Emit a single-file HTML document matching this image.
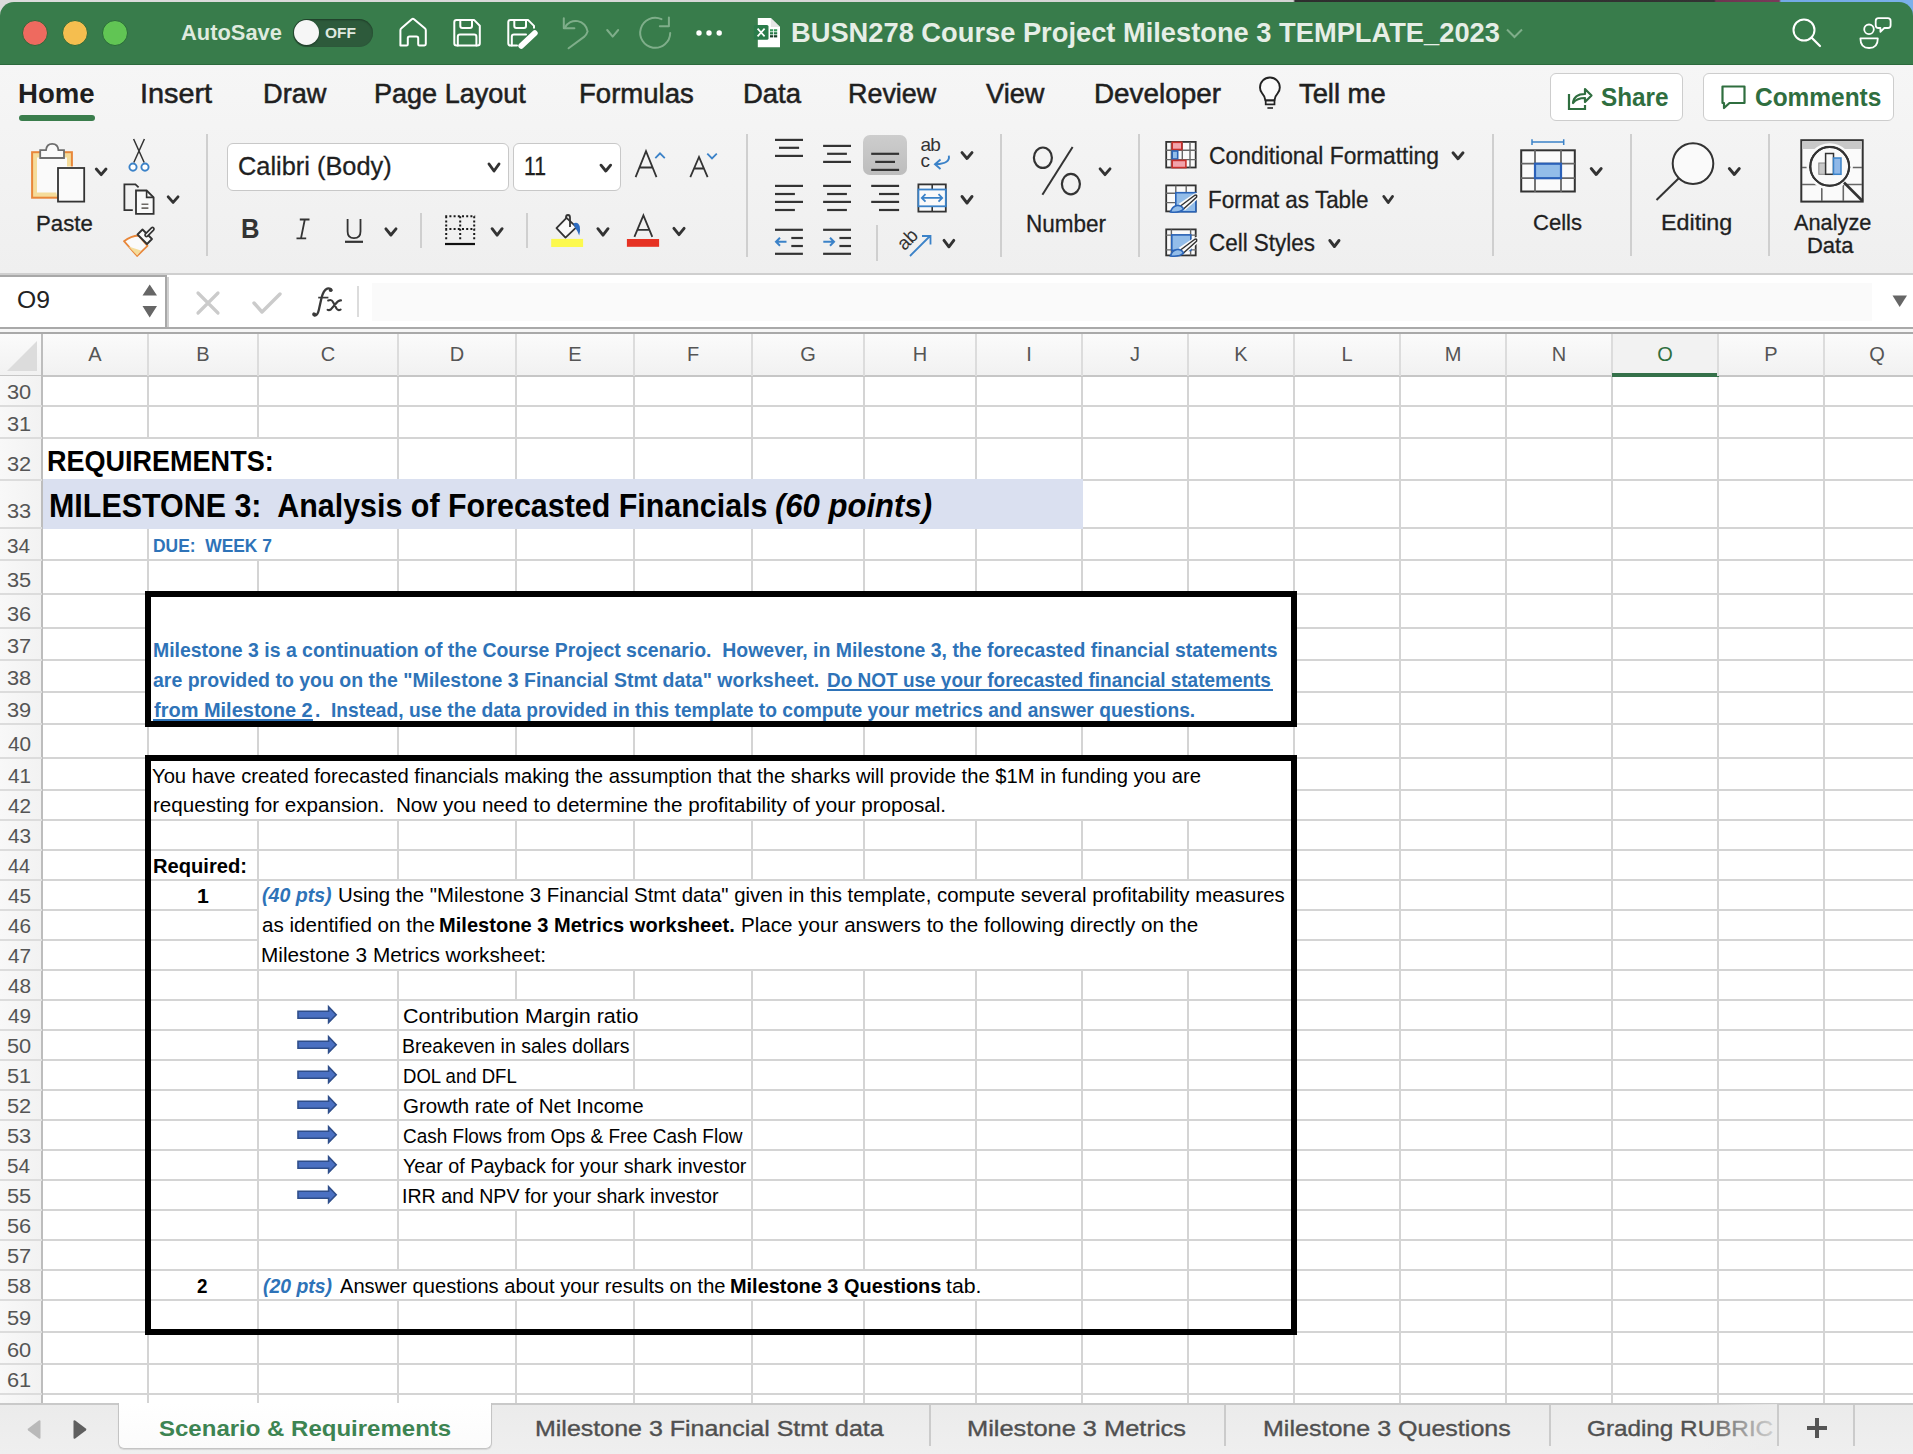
<!DOCTYPE html><html><head><meta charset="utf-8"><style>
*{margin:0;padding:0;box-sizing:border-box}
html,body{width:1913px;height:1454px;overflow:hidden;background:#fff;font-family:"Liberation Sans",sans-serif}
.t{position:absolute;white-space:pre;transform-origin:0 0}
.r{position:absolute}
svg{position:absolute;overflow:visible}
</style></head><body>
<div class="r" style="left:0px;top:376px;width:1913px;height:1027px;background:#fff;"></div>
<div class="r" style="left:42px;top:375px;width:1871px;height:2px;background:#d4d4d4;"></div>
<div class="r" style="left:42px;top:405px;width:1871px;height:2px;background:#d4d4d4;"></div>
<div class="r" style="left:42px;top:437px;width:1871px;height:2px;background:#d4d4d4;"></div>
<div class="r" style="left:42px;top:479px;width:1871px;height:2px;background:#d4d4d4;"></div>
<div class="r" style="left:42px;top:527px;width:1871px;height:2px;background:#d4d4d4;"></div>
<div class="r" style="left:42px;top:559px;width:1871px;height:2px;background:#d4d4d4;"></div>
<div class="r" style="left:42px;top:593px;width:1871px;height:2px;background:#d4d4d4;"></div>
<div class="r" style="left:42px;top:627px;width:107px;height:2px;background:#d4d4d4;"></div>
<div class="r" style="left:1293px;top:627px;width:620px;height:2px;background:#d4d4d4;"></div>
<div class="r" style="left:42px;top:659px;width:107px;height:2px;background:#d4d4d4;"></div>
<div class="r" style="left:1293px;top:659px;width:620px;height:2px;background:#d4d4d4;"></div>
<div class="r" style="left:42px;top:691px;width:107px;height:2px;background:#d4d4d4;"></div>
<div class="r" style="left:1293px;top:691px;width:620px;height:2px;background:#d4d4d4;"></div>
<div class="r" style="left:42px;top:723px;width:1871px;height:2px;background:#d4d4d4;"></div>
<div class="r" style="left:42px;top:757px;width:1871px;height:2px;background:#d4d4d4;"></div>
<div class="r" style="left:42px;top:789px;width:107px;height:2px;background:#d4d4d4;"></div>
<div class="r" style="left:1293px;top:789px;width:620px;height:2px;background:#d4d4d4;"></div>
<div class="r" style="left:42px;top:819px;width:1871px;height:2px;background:#d4d4d4;"></div>
<div class="r" style="left:42px;top:849px;width:1871px;height:2px;background:#d4d4d4;"></div>
<div class="r" style="left:42px;top:879px;width:1871px;height:2px;background:#d4d4d4;"></div>
<div class="r" style="left:42px;top:909px;width:217px;height:2px;background:#d4d4d4;"></div>
<div class="r" style="left:1293px;top:909px;width:620px;height:2px;background:#d4d4d4;"></div>
<div class="r" style="left:42px;top:939px;width:217px;height:2px;background:#d4d4d4;"></div>
<div class="r" style="left:1293px;top:939px;width:620px;height:2px;background:#d4d4d4;"></div>
<div class="r" style="left:42px;top:969px;width:1871px;height:2px;background:#d4d4d4;"></div>
<div class="r" style="left:42px;top:999px;width:1871px;height:2px;background:#d4d4d4;"></div>
<div class="r" style="left:42px;top:1029px;width:1871px;height:2px;background:#d4d4d4;"></div>
<div class="r" style="left:42px;top:1059px;width:1871px;height:2px;background:#d4d4d4;"></div>
<div class="r" style="left:42px;top:1089px;width:1871px;height:2px;background:#d4d4d4;"></div>
<div class="r" style="left:42px;top:1119px;width:1871px;height:2px;background:#d4d4d4;"></div>
<div class="r" style="left:42px;top:1149px;width:1871px;height:2px;background:#d4d4d4;"></div>
<div class="r" style="left:42px;top:1179px;width:1871px;height:2px;background:#d4d4d4;"></div>
<div class="r" style="left:42px;top:1209px;width:1871px;height:2px;background:#d4d4d4;"></div>
<div class="r" style="left:42px;top:1239px;width:1871px;height:2px;background:#d4d4d4;"></div>
<div class="r" style="left:42px;top:1269px;width:1871px;height:2px;background:#d4d4d4;"></div>
<div class="r" style="left:42px;top:1299px;width:1871px;height:2px;background:#d4d4d4;"></div>
<div class="r" style="left:42px;top:1331px;width:1871px;height:2px;background:#d4d4d4;"></div>
<div class="r" style="left:42px;top:1363px;width:1871px;height:2px;background:#d4d4d4;"></div>
<div class="r" style="left:42px;top:1393px;width:1871px;height:2px;background:#d4d4d4;"></div>
<div class="r" style="left:147px;top:376px;width:2px;height:63px;background:#d4d4d4;"></div>
<div class="r" style="left:147px;top:528px;width:2px;height:875px;background:#d4d4d4;"></div>
<div class="r" style="left:257px;top:376px;width:2px;height:63px;background:#d4d4d4;"></div>
<div class="r" style="left:257px;top:560px;width:2px;height:35px;background:#d4d4d4;"></div>
<div class="r" style="left:257px;top:724px;width:2px;height:35px;background:#d4d4d4;"></div>
<div class="r" style="left:257px;top:820px;width:2px;height:583px;background:#d4d4d4;"></div>
<div class="r" style="left:397px;top:376px;width:2px;height:105px;background:#d4d4d4;"></div>
<div class="r" style="left:397px;top:528px;width:2px;height:67px;background:#d4d4d4;"></div>
<div class="r" style="left:397px;top:724px;width:2px;height:35px;background:#d4d4d4;"></div>
<div class="r" style="left:397px;top:820px;width:2px;height:61px;background:#d4d4d4;"></div>
<div class="r" style="left:397px;top:970px;width:2px;height:301px;background:#d4d4d4;"></div>
<div class="r" style="left:397px;top:1300px;width:2px;height:103px;background:#d4d4d4;"></div>
<div class="r" style="left:515px;top:376px;width:2px;height:105px;background:#d4d4d4;"></div>
<div class="r" style="left:515px;top:528px;width:2px;height:67px;background:#d4d4d4;"></div>
<div class="r" style="left:515px;top:724px;width:2px;height:35px;background:#d4d4d4;"></div>
<div class="r" style="left:515px;top:820px;width:2px;height:61px;background:#d4d4d4;"></div>
<div class="r" style="left:515px;top:970px;width:2px;height:31px;background:#d4d4d4;"></div>
<div class="r" style="left:515px;top:1210px;width:2px;height:61px;background:#d4d4d4;"></div>
<div class="r" style="left:515px;top:1300px;width:2px;height:103px;background:#d4d4d4;"></div>
<div class="r" style="left:633px;top:376px;width:2px;height:105px;background:#d4d4d4;"></div>
<div class="r" style="left:633px;top:528px;width:2px;height:67px;background:#d4d4d4;"></div>
<div class="r" style="left:633px;top:724px;width:2px;height:35px;background:#d4d4d4;"></div>
<div class="r" style="left:633px;top:820px;width:2px;height:61px;background:#d4d4d4;"></div>
<div class="r" style="left:633px;top:970px;width:2px;height:31px;background:#d4d4d4;"></div>
<div class="r" style="left:633px;top:1030px;width:2px;height:61px;background:#d4d4d4;"></div>
<div class="r" style="left:633px;top:1210px;width:2px;height:61px;background:#d4d4d4;"></div>
<div class="r" style="left:633px;top:1300px;width:2px;height:103px;background:#d4d4d4;"></div>
<div class="r" style="left:751px;top:376px;width:2px;height:105px;background:#d4d4d4;"></div>
<div class="r" style="left:751px;top:528px;width:2px;height:67px;background:#d4d4d4;"></div>
<div class="r" style="left:751px;top:724px;width:2px;height:35px;background:#d4d4d4;"></div>
<div class="r" style="left:751px;top:820px;width:2px;height:61px;background:#d4d4d4;"></div>
<div class="r" style="left:751px;top:970px;width:2px;height:301px;background:#d4d4d4;"></div>
<div class="r" style="left:751px;top:1300px;width:2px;height:103px;background:#d4d4d4;"></div>
<div class="r" style="left:863px;top:376px;width:2px;height:105px;background:#d4d4d4;"></div>
<div class="r" style="left:863px;top:528px;width:2px;height:67px;background:#d4d4d4;"></div>
<div class="r" style="left:863px;top:724px;width:2px;height:35px;background:#d4d4d4;"></div>
<div class="r" style="left:863px;top:820px;width:2px;height:61px;background:#d4d4d4;"></div>
<div class="r" style="left:863px;top:970px;width:2px;height:301px;background:#d4d4d4;"></div>
<div class="r" style="left:863px;top:1300px;width:2px;height:103px;background:#d4d4d4;"></div>
<div class="r" style="left:975px;top:376px;width:2px;height:105px;background:#d4d4d4;"></div>
<div class="r" style="left:975px;top:528px;width:2px;height:67px;background:#d4d4d4;"></div>
<div class="r" style="left:975px;top:724px;width:2px;height:35px;background:#d4d4d4;"></div>
<div class="r" style="left:975px;top:820px;width:2px;height:61px;background:#d4d4d4;"></div>
<div class="r" style="left:975px;top:970px;width:2px;height:301px;background:#d4d4d4;"></div>
<div class="r" style="left:975px;top:1300px;width:2px;height:103px;background:#d4d4d4;"></div>
<div class="r" style="left:1081px;top:376px;width:2px;height:219px;background:#d4d4d4;"></div>
<div class="r" style="left:1081px;top:724px;width:2px;height:35px;background:#d4d4d4;"></div>
<div class="r" style="left:1081px;top:820px;width:2px;height:61px;background:#d4d4d4;"></div>
<div class="r" style="left:1081px;top:970px;width:2px;height:433px;background:#d4d4d4;"></div>
<div class="r" style="left:1187px;top:376px;width:2px;height:219px;background:#d4d4d4;"></div>
<div class="r" style="left:1187px;top:724px;width:2px;height:35px;background:#d4d4d4;"></div>
<div class="r" style="left:1187px;top:820px;width:2px;height:61px;background:#d4d4d4;"></div>
<div class="r" style="left:1187px;top:970px;width:2px;height:433px;background:#d4d4d4;"></div>
<div class="r" style="left:1293px;top:376px;width:2px;height:1027px;background:#d4d4d4;"></div>
<div class="r" style="left:1399px;top:376px;width:2px;height:1027px;background:#d4d4d4;"></div>
<div class="r" style="left:1505px;top:376px;width:2px;height:1027px;background:#d4d4d4;"></div>
<div class="r" style="left:1611px;top:376px;width:2px;height:1027px;background:#d4d4d4;"></div>
<div class="r" style="left:1717px;top:376px;width:2px;height:1027px;background:#d4d4d4;"></div>
<div class="r" style="left:1823px;top:376px;width:2px;height:1027px;background:#d4d4d4;"></div>
<div class="r" style="left:42px;top:479px;width:1041px;height:50px;background:#dae0f0;"></div>
<div class="r" style="left:145px;top:591px;width:1152px;height:136px;border:6px solid #000"></div>
<div class="r" style="left:145px;top:755px;width:1152px;height:580px;border:6px solid #000"></div>
<div class="t" id="t0" style="left:46.95px;top:444.87px;font-size:28.99px;line-height:32.38px;color:#000;font-weight:bold;transform:scaleX(0.93214);">REQUIREMENTS:</div>
<div class="t" id="t1" style="left:48.99px;top:486.28px;font-size:34.06px;line-height:38.04px;color:#000;font-weight:bold;transform:scaleX(0.89357);">MILESTONE 3:&nbsp; Analysis of Forecasted Financials</div>
<div class="t" id="t2" style="left:774.99px;top:486.28px;font-size:34.06px;line-height:38.04px;color:#000;font-weight:bold;font-style:italic;transform:scaleX(0.91231);">(60 points)</div>
<div class="t" id="t3" style="left:153.39px;top:535.35px;font-size:18.84px;line-height:21.04px;color:#2e73b8;font-weight:bold;transform:scaleX(0.92436);">DUE:&nbsp; WEEK 7</div>
<div class="t" id="t4" style="left:153.20px;top:637.98px;font-size:21.01px;line-height:23.47px;color:#2e73b8;font-weight:bold;transform:scaleX(0.92573);">Milestone 3 is a continuation of the Course Project scenario.&nbsp; However, in Milestone 3, the forecasted financial statements</div>
<div class="t" id="t5" style="left:153.20px;top:667.98px;font-size:21.01px;line-height:23.47px;color:#2e73b8;font-weight:bold;transform:scaleX(0.92821);">are provided to you on the &quot;Milestone 3 Financial Stmt data&quot; worksheet.</div>
<div class="t" id="t6" style="left:826.99px;top:667.98px;font-size:21.01px;line-height:23.47px;color:#2e73b8;font-weight:bold;transform:scaleX(0.90354);">Do NOT use your forecasted financial statements</div>
<div class="r" style="left:827px;top:689px;width:446px;height:2px;background:#2e73b8;"></div>
<div class="t" id="t7" style="left:154.20px;top:697.98px;font-size:21.01px;line-height:23.47px;color:#2e73b8;font-weight:bold;transform:scaleX(0.95117);">from Milestone 2</div>
<div class="r" style="left:153px;top:719px;width:160px;height:2px;background:#2e73b8;"></div>
<div class="t" id="t8" style="left:315.00px;top:697.98px;font-size:21.01px;line-height:23.47px;color:#2e73b8;font-weight:bold;transform:scaleX(0.91426);">.&nbsp; Instead, use the data provided in this template to compute your metrics and answer questions.</div>
<div class="t" id="t9" style="left:152.00px;top:764.66px;font-size:19.71px;line-height:22.02px;color:#000;transform:scaleX(1.02694);">You have created forecasted financials making the assumption that the sharks will provide the $1M in funding you are</div>
<div class="t" id="t10" style="left:152.99px;top:794.46px;font-size:19.71px;line-height:22.02px;color:#000;transform:scaleX(1.04717);">requesting for expansion.&nbsp; Now you need to determine the profitability of your proposal.</div>
<div class="t" id="t11" style="left:152.75px;top:854.86px;font-size:19.71px;line-height:22.02px;color:#000;font-weight:bold;transform:scaleX(1.02343);">Required:</div>
<div class="t" id="t12" style="left:196.80px;top:884.66px;font-size:19.71px;line-height:22.02px;color:#000;font-weight:bold;transform:scaleX(1.08189);">1</div>
<div class="t" id="t13" style="left:262.19px;top:884.16px;font-size:19.71px;line-height:22.02px;color:#2e73b8;font-weight:bold;font-style:italic;transform:scaleX(0.99375);">(40 pts)</div>
<div class="t" id="t14" style="left:338.20px;top:884.16px;font-size:19.71px;line-height:22.02px;color:#000;transform:scaleX(1.03514);">Using the &quot;Milestone 3 Financial Stmt data&quot; given in this template, compute several profitability measures</div>
<div class="t" id="t15" style="left:262.19px;top:914.46px;font-size:19.71px;line-height:22.02px;color:#000;transform:scaleX(1.04595);">as identified on the</div>
<div class="t" id="t16" style="left:438.59px;top:914.46px;font-size:19.71px;line-height:22.02px;color:#000;font-weight:bold;transform:scaleX(1.01992);">Milestone 3 Metrics worksheet.</div>
<div class="t" id="t17" style="left:740.78px;top:914.46px;font-size:19.71px;line-height:22.02px;color:#000;transform:scaleX(1.04725);">Place your answers to the following directly on the</div>
<div class="t" id="t18" style="left:261.17px;top:944.26px;font-size:19.71px;line-height:22.02px;color:#000;transform:scaleX(1.05449);">Milestone 3 Metrics worksheet:</div>
<div class="t" id="t19" style="left:403.19px;top:1004.86px;font-size:19.71px;line-height:22.02px;color:#000;transform:scaleX(1.09263);">Contribution Margin ratio</div>
<svg style="left:296px;top:1005px" width="44" height="20" viewBox="0 0 44 20"><path d="M2 6.2H32.6V1.8L40.2 9.7L32.6 17.6V13.2H2Z" fill="#4a70c2" stroke="#2f4e8a" stroke-width="1.6"/></svg>
<div class="t" id="t20" style="left:402.19px;top:1034.86px;font-size:19.71px;line-height:22.02px;color:#000;transform:scaleX(0.99007);">Breakeven in sales dollars</div>
<svg style="left:296px;top:1035px" width="44" height="20" viewBox="0 0 44 20"><path d="M2 6.2H32.6V1.8L40.2 9.7L32.6 17.6V13.2H2Z" fill="#4a70c2" stroke="#2f4e8a" stroke-width="1.6"/></svg>
<div class="t" id="t21" style="left:403.18px;top:1064.86px;font-size:19.71px;line-height:22.02px;color:#000;transform:scaleX(0.94203);">DOL and DFL</div>
<svg style="left:296px;top:1065px" width="44" height="20" viewBox="0 0 44 20"><path d="M2 6.2H32.6V1.8L40.2 9.7L32.6 17.6V13.2H2Z" fill="#4a70c2" stroke="#2f4e8a" stroke-width="1.6"/></svg>
<div class="t" id="t22" style="left:403.19px;top:1094.86px;font-size:19.71px;line-height:22.02px;color:#000;transform:scaleX(1.04204);">Growth rate of Net Income</div>
<svg style="left:296px;top:1095px" width="44" height="20" viewBox="0 0 44 20"><path d="M2 6.2H32.6V1.8L40.2 9.7L32.6 17.6V13.2H2Z" fill="#4a70c2" stroke="#2f4e8a" stroke-width="1.6"/></svg>
<div class="t" id="t23" style="left:403.19px;top:1124.86px;font-size:19.71px;line-height:22.02px;color:#000;transform:scaleX(0.96341);">Cash Flows from Ops &amp; Free Cash Flow</div>
<svg style="left:296px;top:1125px" width="44" height="20" viewBox="0 0 44 20"><path d="M2 6.2H32.6V1.8L40.2 9.7L32.6 17.6V13.2H2Z" fill="#4a70c2" stroke="#2f4e8a" stroke-width="1.6"/></svg>
<div class="t" id="t24" style="left:403.20px;top:1154.86px;font-size:19.71px;line-height:22.02px;color:#000;transform:scaleX(1.00161);">Year of Payback for your shark investor</div>
<svg style="left:296px;top:1155px" width="44" height="20" viewBox="0 0 44 20"><path d="M2 6.2H32.6V1.8L40.2 9.7L32.6 17.6V13.2H2Z" fill="#4a70c2" stroke="#2f4e8a" stroke-width="1.6"/></svg>
<div class="t" id="t25" style="left:402.18px;top:1184.86px;font-size:19.71px;line-height:22.02px;color:#000;transform:scaleX(0.99375);">IRR and NPV for your shark investor</div>
<svg style="left:296px;top:1185px" width="44" height="20" viewBox="0 0 44 20"><path d="M2 6.2H32.6V1.8L40.2 9.7L32.6 17.6V13.2H2Z" fill="#4a70c2" stroke="#2f4e8a" stroke-width="1.6"/></svg>
<div class="t" id="t26" style="left:197.22px;top:1274.76px;font-size:19.71px;line-height:22.02px;color:#000;font-weight:bold;transform:scaleX(0.95548);">2</div>
<div class="t" id="t27" style="left:262.58px;top:1274.76px;font-size:19.71px;line-height:22.02px;color:#2e73b8;font-weight:bold;font-style:italic;transform:scaleX(0.98495);">(20 pts)</div>
<div class="t" id="t28" style="left:340.00px;top:1274.76px;font-size:19.71px;line-height:22.02px;color:#000;transform:scaleX(1.02106);">Answer questions about your results on the</div>
<div class="t" id="t29" style="left:730.38px;top:1274.76px;font-size:19.71px;line-height:22.02px;color:#000;font-weight:bold;transform:scaleX(1.01149);">Milestone 3 Questions</div>
<div class="t" id="t30" style="left:945.60px;top:1274.76px;font-size:19.71px;line-height:22.02px;color:#000;transform:scaleX(1.07862);">tab.</div>
<div class="r" style="left:0px;top:333px;width:1913px;height:43px;background:linear-gradient(#fbfbfb,#f1f1f1);"></div>
<div class="r" style="left:0px;top:375px;width:1913px;height:2px;background:#c6c6c6;"></div>
<div class="r" style="left:147px;top:333px;width:2px;height:43px;background:#dcdcdc;"></div>
<div class="t" style="left:42px;top:343px;width:106px;text-align:center;font-size:20px;line-height:22px;color:#555">A</div>
<div class="r" style="left:257px;top:333px;width:2px;height:43px;background:#dcdcdc;"></div>
<div class="t" style="left:148px;top:343px;width:110px;text-align:center;font-size:20px;line-height:22px;color:#555">B</div>
<div class="r" style="left:397px;top:333px;width:2px;height:43px;background:#dcdcdc;"></div>
<div class="t" style="left:258px;top:343px;width:140px;text-align:center;font-size:20px;line-height:22px;color:#555">C</div>
<div class="r" style="left:515px;top:333px;width:2px;height:43px;background:#dcdcdc;"></div>
<div class="t" style="left:398px;top:343px;width:118px;text-align:center;font-size:20px;line-height:22px;color:#555">D</div>
<div class="r" style="left:633px;top:333px;width:2px;height:43px;background:#dcdcdc;"></div>
<div class="t" style="left:516px;top:343px;width:118px;text-align:center;font-size:20px;line-height:22px;color:#555">E</div>
<div class="r" style="left:751px;top:333px;width:2px;height:43px;background:#dcdcdc;"></div>
<div class="t" style="left:634px;top:343px;width:118px;text-align:center;font-size:20px;line-height:22px;color:#555">F</div>
<div class="r" style="left:863px;top:333px;width:2px;height:43px;background:#dcdcdc;"></div>
<div class="t" style="left:752px;top:343px;width:112px;text-align:center;font-size:20px;line-height:22px;color:#555">G</div>
<div class="r" style="left:975px;top:333px;width:2px;height:43px;background:#dcdcdc;"></div>
<div class="t" style="left:864px;top:343px;width:112px;text-align:center;font-size:20px;line-height:22px;color:#555">H</div>
<div class="r" style="left:1081px;top:333px;width:2px;height:43px;background:#dcdcdc;"></div>
<div class="t" style="left:976px;top:343px;width:106px;text-align:center;font-size:20px;line-height:22px;color:#555">I</div>
<div class="r" style="left:1187px;top:333px;width:2px;height:43px;background:#dcdcdc;"></div>
<div class="t" style="left:1082px;top:343px;width:106px;text-align:center;font-size:20px;line-height:22px;color:#555">J</div>
<div class="r" style="left:1293px;top:333px;width:2px;height:43px;background:#dcdcdc;"></div>
<div class="t" style="left:1188px;top:343px;width:106px;text-align:center;font-size:20px;line-height:22px;color:#555">K</div>
<div class="r" style="left:1399px;top:333px;width:2px;height:43px;background:#dcdcdc;"></div>
<div class="t" style="left:1294px;top:343px;width:106px;text-align:center;font-size:20px;line-height:22px;color:#555">L</div>
<div class="r" style="left:1505px;top:333px;width:2px;height:43px;background:#dcdcdc;"></div>
<div class="t" style="left:1400px;top:343px;width:106px;text-align:center;font-size:20px;line-height:22px;color:#555">M</div>
<div class="r" style="left:1611px;top:333px;width:2px;height:43px;background:#dcdcdc;"></div>
<div class="t" style="left:1506px;top:343px;width:106px;text-align:center;font-size:20px;line-height:22px;color:#555">N</div>
<div class="r" style="left:1613px;top:334px;width:104px;height:41px;background:#f2f2f2;"></div>
<div class="r" style="left:1612px;top:373px;width:107px;height:4px;background:#35714a;"></div>
<div class="r" style="left:1717px;top:333px;width:2px;height:43px;background:#dcdcdc;"></div>
<div class="t" style="left:1612px;top:343px;width:106px;text-align:center;font-size:20px;line-height:22px;color:#2f6f3f">O</div>
<div class="r" style="left:1823px;top:333px;width:2px;height:43px;background:#dcdcdc;"></div>
<div class="t" style="left:1718px;top:343px;width:106px;text-align:center;font-size:20px;line-height:22px;color:#555">P</div>
<div class="r" style="left:1929px;top:333px;width:2px;height:43px;background:#dcdcdc;"></div>
<div class="t" style="left:1824px;top:343px;width:106px;text-align:center;font-size:20px;line-height:22px;color:#555">Q</div>
<div class="r" style="left:0px;top:376px;width:42px;height:1027px;background:linear-gradient(90deg,#f8f8f8,#f2f2f2);"></div>
<div class="r" style="left:41px;top:333px;width:2px;height:1070px;background:#bdbdbd;"></div>
<div class="r" style="left:0px;top:405px;width:42px;height:2px;background:#dcdcdc;"></div>
<div class="t" id="t31" style="left:6.70px;top:380.38px;font-size:20.58px;line-height:22.99px;color:#555;transform:scaleX(1.05938);">30</div>
<div class="r" style="left:0px;top:437px;width:42px;height:2px;background:#dcdcdc;"></div>
<div class="t" id="t32" style="left:6.70px;top:412.04px;font-size:20.58px;line-height:22.99px;color:#555;transform:scaleX(1.05938);">31</div>
<div class="r" style="left:0px;top:479px;width:42px;height:2px;background:#dcdcdc;"></div>
<div class="t" id="t33" style="left:6.70px;top:452.38px;font-size:20.58px;line-height:22.99px;color:#555;transform:scaleX(1.05938);">32</div>
<div class="r" style="left:0px;top:527px;width:42px;height:2px;background:#dcdcdc;"></div>
<div class="t" id="t34" style="left:6.70px;top:499.38px;font-size:20.58px;line-height:22.99px;color:#555;transform:scaleX(1.05938);">33</div>
<div class="r" style="left:0px;top:559px;width:42px;height:2px;background:#dcdcdc;"></div>
<div class="t" id="t35" style="left:6.75px;top:534.04px;font-size:20.58px;line-height:22.99px;color:#555;transform:scaleX(1.00894);">34</div>
<div class="r" style="left:0px;top:593px;width:42px;height:2px;background:#dcdcdc;"></div>
<div class="t" id="t36" style="left:6.70px;top:567.71px;font-size:20.58px;line-height:22.99px;color:#555;transform:scaleX(1.05938);">35</div>
<div class="r" style="left:0px;top:627px;width:42px;height:2px;background:#dcdcdc;"></div>
<div class="t" id="t37" style="left:6.70px;top:601.71px;font-size:20.58px;line-height:22.99px;color:#555;transform:scaleX(1.05938);">36</div>
<div class="r" style="left:0px;top:659px;width:42px;height:2px;background:#dcdcdc;"></div>
<div class="t" id="t38" style="left:6.70px;top:634.04px;font-size:20.58px;line-height:22.99px;color:#555;transform:scaleX(1.05938);">37</div>
<div class="r" style="left:0px;top:691px;width:42px;height:2px;background:#dcdcdc;"></div>
<div class="t" id="t39" style="left:6.70px;top:666.04px;font-size:20.58px;line-height:22.99px;color:#555;transform:scaleX(1.05938);">38</div>
<div class="r" style="left:0px;top:723px;width:42px;height:2px;background:#dcdcdc;"></div>
<div class="t" id="t40" style="left:6.70px;top:698.04px;font-size:20.58px;line-height:22.99px;color:#555;transform:scaleX(1.05938);">39</div>
<div class="r" style="left:0px;top:757px;width:42px;height:2px;background:#dcdcdc;"></div>
<div class="t" id="t41" style="left:7.80px;top:731.71px;font-size:20.58px;line-height:22.99px;color:#555;transform:scaleX(1.00894);">40</div>
<div class="r" style="left:0px;top:789px;width:42px;height:2px;background:#dcdcdc;"></div>
<div class="t" id="t42" style="left:7.80px;top:764.04px;font-size:20.58px;line-height:22.99px;color:#555;transform:scaleX(1.00894);">41</div>
<div class="r" style="left:0px;top:819px;width:42px;height:2px;background:#dcdcdc;"></div>
<div class="t" id="t43" style="left:7.80px;top:794.38px;font-size:20.58px;line-height:22.99px;color:#555;transform:scaleX(1.00894);">42</div>
<div class="r" style="left:0px;top:849px;width:42px;height:2px;background:#dcdcdc;"></div>
<div class="t" id="t44" style="left:7.80px;top:824.38px;font-size:20.58px;line-height:22.99px;color:#555;transform:scaleX(1.00894);">43</div>
<div class="r" style="left:0px;top:879px;width:42px;height:2px;background:#dcdcdc;"></div>
<div class="t" id="t45" style="left:7.80px;top:854.38px;font-size:20.58px;line-height:22.99px;color:#555;transform:scaleX(0.96308);">44</div>
<div class="r" style="left:0px;top:909px;width:42px;height:2px;background:#dcdcdc;"></div>
<div class="t" id="t46" style="left:7.80px;top:884.38px;font-size:20.58px;line-height:22.99px;color:#555;transform:scaleX(1.00894);">45</div>
<div class="r" style="left:0px;top:939px;width:42px;height:2px;background:#dcdcdc;"></div>
<div class="t" id="t47" style="left:7.80px;top:914.38px;font-size:20.58px;line-height:22.99px;color:#555;transform:scaleX(1.00894);">46</div>
<div class="r" style="left:0px;top:969px;width:42px;height:2px;background:#dcdcdc;"></div>
<div class="t" id="t48" style="left:7.80px;top:944.38px;font-size:20.58px;line-height:22.99px;color:#555;transform:scaleX(1.00894);">47</div>
<div class="r" style="left:0px;top:999px;width:42px;height:2px;background:#dcdcdc;"></div>
<div class="t" id="t49" style="left:7.80px;top:974.38px;font-size:20.58px;line-height:22.99px;color:#555;transform:scaleX(1.00894);">48</div>
<div class="r" style="left:0px;top:1029px;width:42px;height:2px;background:#dcdcdc;"></div>
<div class="t" id="t50" style="left:7.80px;top:1004.38px;font-size:20.58px;line-height:22.99px;color:#555;transform:scaleX(1.00894);">49</div>
<div class="r" style="left:0px;top:1059px;width:42px;height:2px;background:#dcdcdc;"></div>
<div class="t" id="t51" style="left:6.70px;top:1034.38px;font-size:20.58px;line-height:22.99px;color:#555;transform:scaleX(1.05938);">50</div>
<div class="r" style="left:0px;top:1089px;width:42px;height:2px;background:#dcdcdc;"></div>
<div class="t" id="t52" style="left:6.70px;top:1064.38px;font-size:20.58px;line-height:22.99px;color:#555;transform:scaleX(1.05938);">51</div>
<div class="r" style="left:0px;top:1119px;width:42px;height:2px;background:#dcdcdc;"></div>
<div class="t" id="t53" style="left:6.70px;top:1094.38px;font-size:20.58px;line-height:22.99px;color:#555;transform:scaleX(1.05938);">52</div>
<div class="r" style="left:0px;top:1149px;width:42px;height:2px;background:#dcdcdc;"></div>
<div class="t" id="t54" style="left:6.70px;top:1124.38px;font-size:20.58px;line-height:22.99px;color:#555;transform:scaleX(1.05938);">53</div>
<div class="r" style="left:0px;top:1179px;width:42px;height:2px;background:#dcdcdc;"></div>
<div class="t" id="t55" style="left:6.75px;top:1154.38px;font-size:20.58px;line-height:22.99px;color:#555;transform:scaleX(1.00894);">54</div>
<div class="r" style="left:0px;top:1209px;width:42px;height:2px;background:#dcdcdc;"></div>
<div class="t" id="t56" style="left:6.70px;top:1184.38px;font-size:20.58px;line-height:22.99px;color:#555;transform:scaleX(1.05938);">55</div>
<div class="r" style="left:0px;top:1239px;width:42px;height:2px;background:#dcdcdc;"></div>
<div class="t" id="t57" style="left:6.70px;top:1214.38px;font-size:20.58px;line-height:22.99px;color:#555;transform:scaleX(1.05938);">56</div>
<div class="r" style="left:0px;top:1269px;width:42px;height:2px;background:#dcdcdc;"></div>
<div class="t" id="t58" style="left:6.70px;top:1244.38px;font-size:20.58px;line-height:22.99px;color:#555;transform:scaleX(1.05938);">57</div>
<div class="r" style="left:0px;top:1299px;width:42px;height:2px;background:#dcdcdc;"></div>
<div class="t" id="t59" style="left:6.70px;top:1274.38px;font-size:20.58px;line-height:22.99px;color:#555;transform:scaleX(1.05938);">58</div>
<div class="r" style="left:0px;top:1331px;width:42px;height:2px;background:#dcdcdc;"></div>
<div class="t" id="t60" style="left:6.70px;top:1306.04px;font-size:20.58px;line-height:22.99px;color:#555;transform:scaleX(1.05938);">59</div>
<div class="r" style="left:0px;top:1363px;width:42px;height:2px;background:#dcdcdc;"></div>
<div class="t" id="t61" style="left:6.70px;top:1338.04px;font-size:20.58px;line-height:22.99px;color:#555;transform:scaleX(1.05938);">60</div>
<div class="r" style="left:0px;top:1393px;width:42px;height:2px;background:#dcdcdc;"></div>
<div class="t" id="t62" style="left:6.70px;top:1368.38px;font-size:20.58px;line-height:22.99px;color:#555;transform:scaleX(1.05938);">61</div>
<div class="r" style="left:0px;top:1425px;width:42px;height:2px;background:#dcdcdc;"></div>
<div class="t" id="t63" style="left:6.70px;top:1400.04px;font-size:20.58px;line-height:22.99px;color:#555;transform:scaleX(1.05938);">62</div>
<svg style="left:0;top:333px" width="42" height="43"><path d="M37 8V38H7Z" fill="#dcdcdc"/></svg>
<div class="r" style="left:0px;top:275px;width:1913px;height:58px;background:#fff;"></div>
<div class="r" style="left:0px;top:273px;width:1913px;height:2px;background:#cfcfcf;"></div>
<div class="r" style="left:0px;top:275px;width:166px;height:2px;background:#a8a8a8;"></div>
<div class="r" style="left:165px;top:275px;width:2px;height:52px;background:#a8a8a8;"></div>
<div class="r" style="left:167px;top:277px;width:2px;height:50px;background:#d0d0d0;"></div>
<div class="r" style="left:372px;top:283px;width:1500px;height:38px;background:#fafafa;"></div>
<div class="r" style="left:0px;top:327px;width:1913px;height:2px;background:#a9a9a9;"></div>
<div class="r" style="left:0px;top:329px;width:1913px;height:3px;background:#f6f6f6;"></div>
<div class="r" style="left:0px;top:332px;width:1913px;height:1.5px;background:#a9a9a9;"></div>
<div class="t" id="t64" style="left:16.71px;top:286.89px;font-size:23.77px;line-height:26.55px;color:#222;transform:scaleX(1.03813);">O9</div>
<svg style="left:142px;top:284px" width="16" height="34"><path d="M0.5 11.5L7.7 0.5L15 11.5Z M0.5 22L15 22L7.7 33.5Z" fill="#666"/></svg>
<svg style="left:196px;top:291px" width="24" height="24"><path d="M2 2L22 22M22 2L2 22" stroke="#cbcbcb" stroke-width="3.2" stroke-linecap="round"/></svg>
<svg style="left:252px;top:291px" width="30" height="24"><path d="M2 12L10 21L28 3" stroke="#cbcbcb" stroke-width="3.4" fill="none" stroke-linecap="round" stroke-linejoin="round"/></svg>
<svg style="left:0;top:0" width="400" height="340"><path d="M331.5 290.2Q330 287.6 327.2 288.6Q323.5 290 321.5 298L318.8 310Q317.5 315.6 314.8 315.6Q313.2 315.4 313.6 313.6" fill="none" stroke="#3a3a3a" stroke-width="2.3" stroke-linecap="round"/><circle cx="330.6" cy="290" r="1.9" fill="#3a3a3a"/><circle cx="314.4" cy="314.4" r="1.9" fill="#3a3a3a"/><path d="M318.2 297.6H328.4" stroke="#3a3a3a" stroke-width="1.7"/><path d="M328.2 300.5Q331.5 299 333 302L336.5 308.5Q338 311 340.6 309.6M341 300.4Q338.6 300 335.5 304L330.8 309.5Q329 310.6 327.6 309.8" fill="none" stroke="#3a3a3a" stroke-width="2.1" stroke-linecap="round"/></svg>
<div class="r" style="left:357px;top:286px;width:2px;height:31px;background:#dcdcdc;"></div>
<svg style="left:1892px;top:295px" width="16" height="12"><path d="M0.5 0.5H15L7.7 12Z" fill="#666"/></svg>
<div class="r" style="left:0px;top:1403px;width:1913px;height:51px;background:linear-gradient(#ebebeb,#efefef);"></div>
<div class="r" style="left:0px;top:1403px;width:1913px;height:2px;background:#c9c9c9;"></div>
<svg style="left:26px;top:1419px" width="18" height="22"><path d="M14.5 2.5V18.5Q14.5 20.5 12.8 19.4L2.2 11.6Q1 10.5 2.2 9.4L12.8 1.6Q14.5 0.5 14.5 2.5Z" fill="#b9b9b9"/></svg>
<svg style="left:72px;top:1419px" width="18" height="22"><path d="M1.5 2.5V18.5Q1.5 20.5 3.2 19.4L13.8 11.6Q15 10.5 13.8 9.4L3.2 1.6Q1.5 0.5 1.5 2.5Z" fill="#5f5f5f"/></svg>
<div class="r" style="left:118px;top:1403px;width:374px;height:46px;background:linear-gradient(#fff,#fbfbfb);border:1.5px solid #c4c4c4;border-top:none;border-radius:0 0 6px 6px;box-shadow:0 1px 1px rgba(0,0,0,.10)"></div>
<div class="t" id="t65" style="left:158.79px;top:1417.23px;font-size:21.74px;line-height:24.28px;color:#3d8452;font-weight:bold;transform:scaleX(1.10452);">Scenario &amp; Requirements</div>
<div class="t" id="t66" style="left:535.19px;top:1417.23px;font-size:21.74px;line-height:24.28px;color:#505050;transform:scaleX(1.14979);-webkit-text-stroke:0.35px #505050;">Milestone 3 Financial Stmt data</div>
<div class="r" style="left:929px;top:1405px;width:2px;height:41px;background:#cbcbcb;"></div>
<div class="t" id="t67" style="left:966.97px;top:1417.23px;font-size:21.74px;line-height:24.28px;color:#505050;transform:scaleX(1.16958);-webkit-text-stroke:0.35px #505050;">Milestone 3 Metrics</div>
<div class="r" style="left:1224px;top:1405px;width:2px;height:41px;background:#cbcbcb;"></div>
<div class="t" id="t68" style="left:1262.97px;top:1417.23px;font-size:21.74px;line-height:24.28px;color:#505050;transform:scaleX(1.15215);-webkit-text-stroke:0.35px #505050;">Milestone 3 Questions</div>
<div class="r" style="left:1549px;top:1405px;width:2px;height:41px;background:#cbcbcb;"></div>
<div class="t" id="t69" style="left:1586.99px;top:1417.23px;font-size:21.74px;line-height:24.28px;color:#505050;transform:scaleX(1.11683);-webkit-text-stroke:0.35px #505050;">Grading RUBRIC</div>
<div class="r" style="left:1700px;top:1404px;width:77px;height:46px;background:linear-gradient(90deg,rgba(236,236,236,0),rgba(236,236,236,.85))"></div>
<div class="r" style="left:1777px;top:1405px;width:2px;height:41px;background:#cbcbcb;"></div>
<svg style="left:1800px;top:1410px" width="34" height="34"><path d="M17 8V28M7 18H27" stroke="#555" stroke-width="4"/></svg>
<div class="r" style="left:1853px;top:1405px;width:2px;height:41px;background:#cbcbcb;"></div>
<div class="r" style="left:0px;top:0px;width:1913px;height:3px;background:linear-gradient(90deg,#dcdcdc 0,#d4d4d4 67.6%,#2e2e2e 67.7%,#333 89.6%,#6e3550 89.7%,#7a3a5a 93%,#73a9e6 93.1%,#7ab0ea 100%);"></div>
<div class="r" style="left:0px;top:0px;width:24px;height:24px;background:#dcdcdc;"></div>
<div class="r" style="left:1889px;top:0px;width:24px;height:24px;background:#7ab0ea;"></div>
<div class="r" style="left:0;top:2px;width:1913px;height:63px;background:#387c4b;border-radius:14px 14px 0 0"></div>
<div class="r" style="left:0px;top:64px;width:1913px;height:1px;background:#2c6a3d;"></div>
<div class="r" style="left:22px;top:20px;width:26px;height:26px;border-radius:50%;background:#ee6a5f;border:1.5px solid #2a6a3a"></div>
<div class="r" style="left:62px;top:20px;width:26px;height:26px;border-radius:50%;background:#f5be4f;border:1.5px solid #2a6a3a"></div>
<div class="r" style="left:102px;top:20px;width:26px;height:26px;border-radius:50%;background:#61c554;border:1.5px solid #2a6a3a"></div>
<div class="t" id="t70" style="left:180.98px;top:20.01px;font-size:22.75px;line-height:25.42px;color:#dfeadf;font-weight:bold;transform:scaleX(0.96222);">AutoSave</div>
<div class="r" style="left:293px;top:19px;width:80px;height:28px;border-radius:14px;background:#2d5a3b;box-shadow:inset 0 1px 2px rgba(0,0,0,.35)"></div>
<div class="r" style="left:294px;top:20px;width:25px;height:25px;border-radius:50%;background:#f6f6f6;box-shadow:0 1px 2px rgba(0,0,0,.4)"></div>
<div class="t" id="t71" style="left:324.97px;top:23.87px;font-size:15.51px;line-height:17.32px;color:#dfe8df;font-weight:bold;transform:scaleX(1.00064);">OFF</div>
<svg style="left:0;top:0" width="600" height="64"><g fill="none" stroke="#fff" stroke-width="2" stroke-linejoin="round" stroke-linecap="round"><path d="M400.4 45.4V30.2Q400.4 29 401.4 28.2L411.8 19.2Q412.9 18.3 414 19.2L424.8 28.2Q425.8 29 425.8 30.2V44Q425.8 45.4 424.4 45.4H419.4Q418.2 45.4 418.2 44.2V38.2Q418.2 36.4 416.4 36.4H409.6Q407.8 36.4 407.8 38.2V44.2Q407.8 45.4 406.6 45.4H401.6Q400.4 45.4 400.4 44.2Z"/><path d="M454.3 22.2Q454.3 19.9 456.6 19.9H474L479.8 25.7V43.3Q479.8 45.6 477.5 45.6H456.6Q454.3 45.6 454.3 43.3Z"/><path d="M460.3 20.2V26Q460.3 28 462.3 28H470Q472 28 472 26V20.2"/><path d="M457.8 45.4V36.8Q457.8 34.6 460 34.6H474.2Q476.4 34.6 476.4 36.8V45.4"/><path d="M517 45.6H510.6Q508.3 45.6 508.3 43.3V22.2Q508.3 19.9 510.6 19.9H528L534 25.9V27.8"/><path d="M514.3 20.2V26Q514.3 28 516.3 28H524Q526 28 526 26V20.2"/><path d="M511.8 45.4V36.8Q511.8 34.6 514 34.6H526"/></g><path d="M521.2 45.8L534.8 33.2" stroke="#fff" stroke-width="5.8" stroke-linecap="round"/><path d="M519.8 48.4L520.5 43.5L523.5 46.5Z" fill="#fff"/></svg>
<svg style="left:0;top:0" width="800" height="64"><g fill="none" stroke="#7fae8a" stroke-width="2" stroke-linecap="round" stroke-linejoin="round"><path d="M563.8 18.2V28.3H574.4"/><path d="M565 27.5A12 12 0 0 1 587.6 31.5Q586.6 34.5 584.4 36.6L568.6 48.3"/><path d="M607.2 30L612.7 36.6L618.2 30"/><path d="M670.2 33A15 15 0 1 1 661.5 19.2"/><path d="M659.8 26.3H668.9V17.4"/></g><circle cx="699" cy="33" r="2.7" fill="#fff"/><circle cx="709" cy="33" r="2.7" fill="#fff"/><circle cx="719.2" cy="33" r="2.7" fill="#fff"/><path d="M757.8 18H770.8L780 27V47.2H757.8Z" fill="#fff"/><path d="M770.8 18V27H780Z" fill="#e6e6e6"/><rect x="753.9" y="25" width="14.6" height="14.8" rx="1.5" fill="#2a7b4a"/><path d="M757.6 28.6L764.6 36.4M764.6 28.6L757.6 36.4" stroke="#fff" stroke-width="1.7"/><rect x="770" y="29.2" width="3.2" height="2.2" fill="#3a9a5e"/><rect x="774" y="29.2" width="3.2" height="2.2" fill="#3a9a5e"/><rect x="770" y="32.2" width="3.2" height="2.2" fill="#2a7b4a"/><rect x="774" y="32.2" width="3.2" height="2.2" fill="#2a7b4a"/><rect x="770" y="35.2" width="3.2" height="2.2" fill="#173d26"/><rect x="774" y="35.2" width="3.2" height="2.2" fill="#173d26"/></svg>
<div class="t" id="t72" style="left:790.59px;top:18.14px;font-size:27.25px;line-height:30.43px;color:#e6eee6;font-weight:bold;transform:scaleX(1.00096);">BUSN278 Course Project Milestone 3 TEMPLATE_2023</div>
<svg style="left:1506px;top:28px" width="17" height="11"><path d="M1 1.5L8.5 9L16 1.5" fill="none" stroke="#7fae8a" stroke-width="2"/></svg>
<svg style="left:1791px;top:17px" width="30" height="32"><circle cx="13" cy="13" r="10.5" fill="none" stroke="#fff" stroke-width="2"/><path d="M20.5 20.5L29 29" stroke="#fff" stroke-width="2.2" stroke-linecap="round"/></svg>
<svg style="left:0;top:0" width="1913" height="64"><circle cx="1869" cy="29.3" r="4.8" fill="none" stroke="#fff" stroke-width="1.8"/><path d="M1860.4 38.4H1877.8Q1877.8 48 1869.1 48Q1860.4 48 1860.4 38.4Z" fill="none" stroke="#fff" stroke-width="1.8" stroke-linejoin="round"/><path d="M1878.5 18.2H1887.8Q1890.6 18.2 1890.6 21V25.2Q1890.6 28 1887.8 28H1884.3L1880.4 31.8V28H1878.5Q1875.7 28 1875.7 25.2V21Q1875.7 18.2 1878.5 18.2Z" fill="none" stroke="#fff" stroke-width="1.8" stroke-linejoin="round"/></svg>
<div class="r" style="left:0px;top:65px;width:1913px;height:208px;background:linear-gradient(#f6f6f6,#efefef);"></div>
<div class="t" id="t73" style="left:18.13px;top:78.64px;font-size:27.25px;line-height:30.43px;color:#1f1f1f;font-weight:bold;transform:scaleX(1.01291);">Home</div>
<div class="t" id="t74" style="left:140.32px;top:78.64px;font-size:27.25px;line-height:30.43px;color:#1f1f1f;transform:scaleX(1.05810);-webkit-text-stroke:0.55px #1f1f1f;">Insert</div>
<div class="t" id="t75" style="left:262.73px;top:78.64px;font-size:27.25px;line-height:30.43px;color:#1f1f1f;transform:scaleX(0.99767);-webkit-text-stroke:0.55px #1f1f1f;">Draw</div>
<div class="t" id="t76" style="left:374.39px;top:78.64px;font-size:27.25px;line-height:30.43px;color:#1f1f1f;transform:scaleX(0.99235);-webkit-text-stroke:0.55px #1f1f1f;">Page Layout</div>
<div class="t" id="t77" style="left:578.95px;top:78.64px;font-size:27.25px;line-height:30.43px;color:#1f1f1f;transform:scaleX(1.01093);-webkit-text-stroke:0.55px #1f1f1f;">Formulas</div>
<div class="t" id="t78" style="left:743.33px;top:78.64px;font-size:27.25px;line-height:30.43px;color:#1f1f1f;transform:scaleX(1.00744);-webkit-text-stroke:0.55px #1f1f1f;">Data</div>
<div class="t" id="t79" style="left:848.38px;top:78.64px;font-size:27.25px;line-height:30.43px;color:#1f1f1f;transform:scaleX(0.98728);-webkit-text-stroke:0.55px #1f1f1f;">Review</div>
<div class="t" id="t80" style="left:985.81px;top:78.64px;font-size:27.25px;line-height:30.43px;color:#1f1f1f;transform:scaleX(0.99737);-webkit-text-stroke:0.55px #1f1f1f;">View</div>
<div class="t" id="t81" style="left:1094.17px;top:78.64px;font-size:27.25px;line-height:30.43px;color:#1f1f1f;transform:scaleX(1.02245);-webkit-text-stroke:0.55px #1f1f1f;">Developer</div>
<div class="t" id="t82" style="left:1299.37px;top:78.64px;font-size:27.25px;line-height:30.43px;color:#1f1f1f;transform:scaleX(1.00313);-webkit-text-stroke:0.55px #1f1f1f;">Tell me</div>
<div class="r" style="left:19px;top:115px;width:76px;height:6px;border-radius:3px;background:#3a7d4c"></div>
<svg style="left:0;top:0" width="1400" height="130"><path d="M1265.4 100.4Q1265 96.5 1262.2 93.4Q1260 90.8 1260 87.4A9.9 9.9 0 0 1 1279.8 87.4Q1279.8 90.8 1277.6 93.4Q1274.8 96.5 1274.4 100.4Z" fill="#fafafa" stroke="#222" stroke-width="1.9" stroke-linejoin="round"/><rect x="1265.7" y="100.4" width="8.8" height="4" fill="none" stroke="#222" stroke-width="1.7"/><path d="M1267.4 108H1273" stroke="#222" stroke-width="1.6"/></svg>
<div class="r" style="left:1550px;top:73px;width:133px;height:48px;border:1.5px solid #cdcdcd;border-radius:6px;background:#fff"></div>
<div class="r" style="left:1703px;top:73px;width:191px;height:48px;border:1.5px solid #cdcdcd;border-radius:6px;background:#fff"></div>
<svg style="left:1567px;top:85px" width="26" height="26"><path d="M2 9V24H18V20" fill="none" stroke="#2f6e3f" stroke-width="2.2"/><path d="M6 18Q7 9 18 9V4L24.5 10.5L18 17V13Q10 13 6 18Z" fill="none" stroke="#2f6e3f" stroke-width="2.2" stroke-linejoin="round"/></svg>
<div class="t" id="t83" style="left:1601.38px;top:83.94px;font-size:24.93px;line-height:27.84px;color:#2f6e3f;font-weight:bold;transform:scaleX(0.97596);">Share</div>
<svg style="left:1720px;top:84px" width="27" height="27"><path d="M2.5 2.5H24.5V19H9.5L4 24V19H2.5Z" fill="none" stroke="#2f6e3f" stroke-width="2.2" stroke-linejoin="round"/></svg>
<div class="t" id="t84" style="left:1754.99px;top:83.94px;font-size:24.93px;line-height:27.84px;color:#2f6e3f;font-weight:bold;transform:scaleX(0.98100);">Comments</div>
<div class="r" style="left:206px;top:134px;width:1.5px;height:122px;background:#cfcfcf;"></div>
<div class="r" style="left:746px;top:134px;width:1.5px;height:123px;background:#cfcfcf;"></div>
<div class="r" style="left:1000px;top:134px;width:1.5px;height:123px;background:#cfcfcf;"></div>
<div class="r" style="left:1138px;top:134px;width:1.5px;height:123px;background:#cfcfcf;"></div>
<div class="r" style="left:1492px;top:134px;width:1.5px;height:122px;background:#cfcfcf;"></div>
<div class="r" style="left:1630px;top:134px;width:1.5px;height:122px;background:#cfcfcf;"></div>
<div class="r" style="left:1768px;top:134px;width:1.5px;height:122px;background:#cfcfcf;"></div>
<div class="r" style="left:420px;top:213px;width:1.5px;height:35px;background:#cfcfcf;"></div>
<div class="r" style="left:526px;top:213px;width:1.5px;height:35px;background:#cfcfcf;"></div>
<div class="r" style="left:876px;top:225px;width:1.5px;height:36px;background:#cfcfcf;"></div>
<div class="t" id="t85" style="left:35.89px;top:211.07px;font-size:22.46px;line-height:25.09px;color:#1f1f1f;transform:scaleX(0.98807);-webkit-text-stroke:0.3px #1f1f1f;">Paste</div>
<div class="r" style="left:227px;top:143px;width:282px;height:48px;border:1px solid #c8c8c8;border-radius:6px;background:#fff"></div>
<div class="t" id="t86" style="left:238.38px;top:151.95px;font-size:25.80px;line-height:28.82px;color:#1f1f1f;transform:scaleX(0.98360);-webkit-text-stroke:0.3px #1f1f1f;">Calibri (Body)</div>
<div class="r" style="left:513px;top:143px;width:108px;height:48px;border:1px solid #c8c8c8;border-radius:6px;background:#fff"></div>
<div class="t" id="t87" style="left:524.30px;top:151.95px;font-size:25.80px;line-height:28.82px;color:#1f1f1f;transform:scaleX(0.82096);-webkit-text-stroke:0.3px #1f1f1f;">11</div>
<div class="t" id="t88" style="left:241.31px;top:212.56px;font-size:28.12px;line-height:31.41px;color:#333;font-weight:bold;transform:scaleX(0.91111);">B</div>
<div class="r" style="left:863px;top:135px;width:44px;height:40px;border-radius:7px;background:linear-gradient(#cdcdcd,#bdbdbd)"></div>
<div class="t" style="left:920.5px;top:137px;font-size:19px;line-height:15.5px;color:#333;letter-spacing:-0.8px">ab<br>c</div>
<div class="t" style="left:897px;top:230px;font-size:19px;line-height:19px;color:#333;letter-spacing:-0.5px;transform:rotate(-45deg);transform-origin:50% 50%">ab</div>
<div class="t" id="t89" style="left:1025.93px;top:210.10px;font-size:24.20px;line-height:27.03px;color:#1f1f1f;transform:scaleX(0.93087);-webkit-text-stroke:0.3px #1f1f1f;">Number</div>
<div class="t" id="t90" style="left:1208.99px;top:141.80px;font-size:24.20px;line-height:27.03px;color:#1f1f1f;transform:scaleX(0.94470);-webkit-text-stroke:0.3px #1f1f1f;">Conditional Formatting</div>
<div class="t" id="t91" style="left:1207.96px;top:185.50px;font-size:24.20px;line-height:27.03px;color:#1f1f1f;transform:scaleX(0.92837);-webkit-text-stroke:0.3px #1f1f1f;">Format as Table</div>
<div class="t" id="t92" style="left:1208.98px;top:229.10px;font-size:24.20px;line-height:27.03px;color:#1f1f1f;transform:scaleX(0.92725);-webkit-text-stroke:0.3px #1f1f1f;">Cell Styles</div>
<div class="t" id="t93" style="left:1533.35px;top:211.62px;font-size:21.30px;line-height:23.80px;color:#1f1f1f;transform:scaleX(1.03508);-webkit-text-stroke:0.3px #1f1f1f;">Cells</div>
<div class="t" id="t94" style="left:1661.09px;top:211.62px;font-size:21.30px;line-height:23.80px;color:#1f1f1f;transform:scaleX(1.09455);-webkit-text-stroke:0.3px #1f1f1f;">Editing</div>
<div class="t" id="t95" style="left:1793.99px;top:211.62px;font-size:21.30px;line-height:23.80px;color:#1f1f1f;transform:scaleX(1.02089);-webkit-text-stroke:0.3px #1f1f1f;">Analyze</div>
<div class="t" id="t96" style="left:1806.50px;top:235.42px;font-size:21.30px;line-height:23.80px;color:#1f1f1f;transform:scaleX(1.03148);-webkit-text-stroke:0.3px #1f1f1f;">Data</div>
<svg style="left:0;top:0" width="1913" height="280" viewBox="0 0 1913 280"><rect x="32.1" y="152.2" width="39.8" height="45.5" fill="#f5dc9a" stroke="#e8873a" stroke-width="2"/><rect x="37" y="157.5" width="30" height="35" fill="#fafafa"/><path d="M40.2 158V150.2H46Q46.5 143.8 52.2 143.8Q58 143.8 58.4 150.2H64V158Z" fill="#fafafa" stroke="#6e6e6e" stroke-width="1.8"/><rect x="56.5" y="166.5" width="21" height="28" fill="#fff" stroke="none"/><rect x="58" y="168" width="26.2" height="33.6" fill="#fafafa" stroke="#333" stroke-width="1.8"/><path d="M96.3 169.0L101.2 174.6L106.0 169.0" fill="none" stroke="#333" stroke-width="2.9" stroke-linecap="round" stroke-linejoin="round"/><path d="M133.6 139L144.2 162.5M144.4 139L133.8 162.5" stroke="#333" stroke-width="1.5"/><circle cx="133" cy="167.1" r="3.6" fill="#fff" stroke="#3b82c8" stroke-width="1.9"/><circle cx="145" cy="167.1" r="3.6" fill="#fff" stroke="#3b82c8" stroke-width="1.9"/><path d="M132.8 210.2H124.4V184.4H135.4L138.6 187.4" fill="none" stroke="#333" stroke-width="1.8"/><path d="M136 190.5H146.6L153.6 197.4V213.9H136Z" fill="#fafafa" stroke="#333" stroke-width="1.8"/><path d="M146.6 190.5V197.4H153.6" fill="none" stroke="#333" stroke-width="1.6"/><path d="M141.5 204.3H148.4M141.5 208.1H148.4" stroke="#6e6a66" stroke-width="1.6"/><path d="M168.2 196.9L173.1 202.4L178.0 196.9" fill="none" stroke="#333" stroke-width="2.9" stroke-linecap="round" stroke-linejoin="round"/><path d="M124 241.2Q131 236 138.5 235.5L147.5 245.8Q141 252 137.2 256Z" fill="#fafafa" stroke="#e8873a" stroke-width="1.8" stroke-linejoin="round"/><path d="M128.5 246.5L141 250.5L137.2 255.5Z" fill="#f5dc9a"/><path d="M137.5 234.5L142.5 229.5L152 239L147 244Z" fill="#fafafa" stroke="#333" stroke-width="1.8" stroke-linejoin="round"/><path d="M146.5 235L152.5 229" stroke="#333" stroke-width="4.6" stroke-linecap="round"/><path d="M146.5 235L152.5 229" stroke="#fafafa" stroke-width="1.2" stroke-linecap="round"/><path d="M489.0 164.0L494.0 171.0L499.0 164.0" fill="none" stroke="#333" stroke-width="2.9" stroke-linecap="round" stroke-linejoin="round"/><path d="M601.0 165.2L605.8 171.0L610.6 165.2" fill="none" stroke="#333" stroke-width="2.9" stroke-linecap="round" stroke-linejoin="round"/><path d="M635.6 177.1L646 151.2L656.5 177.1M639.5 167.5H652.5" fill="none" stroke="#333" stroke-width="1.8"/><path d="M655.3 158.2L660 153.3L664.8 158.2" fill="none" stroke="#3b82c8" stroke-width="1.8"/><path d="M690.3 177.1L699 157L707.6 177.1M693.7 168.5H704.3" fill="none" stroke="#333" stroke-width="1.8"/><path d="M707.3 153.7L712 158.4L716.8 153.7" fill="none" stroke="#3b82c8" stroke-width="1.8"/><path d="M299.8 219.5H309.5M296.5 238.3H306.2M304.8 219.5L301 238.3" fill="none" stroke="#333" stroke-width="1.8"/><path d="M347.6 219V231.5Q347.6 238.2 354 238.2Q360.5 238.2 360.5 231.5V219" fill="none" stroke="#333" stroke-width="1.8"/><path d="M345 241.8H363" stroke="#333" stroke-width="2.2"/><path d="M385.9 228.8L390.9 235.0L396.0 228.8" fill="none" stroke="#333" stroke-width="2.9" stroke-linecap="round" stroke-linejoin="round"/><path d="M445.2 216.2H475.2M446.2 216.2V241.5M474.2 216.2V241.5M460.2 216.2V241.5M445.2 229H475.2" fill="none" stroke="#1a1a1a" stroke-width="2" stroke-dasharray="2 2.2"/><path d="M445 244H475" stroke="#111" stroke-width="2.2"/><path d="M492.1 228.7L497.1 235.1L502.1 228.7" fill="none" stroke="#333" stroke-width="2.9" stroke-linecap="round" stroke-linejoin="round"/><path d="M556.5 228.2L566.5 217.8L576.5 227.2L565.5 237.6Z" fill="#fafafa" stroke="#333" stroke-width="1.8" stroke-linejoin="round"/><path d="M570 227V217.5Q570 215 568 215Q566 215 566 217.5V219" fill="none" stroke="#333" stroke-width="1.8"/><path d="M573.2 223.4Q578.2 221 579.8 226.5Q580.6 230.5 579.2 235.6Q577.6 230.6 575.2 228Z" fill="#2e6cc0"/><rect x="551.2" y="238.9" width="31.9" height="8.1" fill="#fcf94e"/><path d="M597.9 228.7L603.0 235.1L608.0 228.7" fill="none" stroke="#333" stroke-width="2.9" stroke-linecap="round" stroke-linejoin="round"/><path d="M634.4 236.9L643.4 215.3L652.3 236.9M637.6 229.8H649.2" fill="none" stroke="#333" stroke-width="1.8"/><rect x="626.9" y="239" width="32.2" height="7.8" fill="#e63223"/><path d="M673.9 228.4L679.0 234.6L684.1 228.4" fill="none" stroke="#333" stroke-width="2.9" stroke-linecap="round" stroke-linejoin="round"/><path d="M775.0 139.9H803.0" stroke="#333" stroke-width="2.2"/><path d="M775.0 155.9H803.0" stroke="#333" stroke-width="2.2"/><path d="M779.0 147.8H799.1" stroke="#333" stroke-width="2.2"/><path d="M823.1 145.9H851.0" stroke="#333" stroke-width="2.2"/><path d="M823.1 161.9H851.0" stroke="#333" stroke-width="2.2"/><path d="M827.1 153.8H846.9" stroke="#333" stroke-width="2.2"/><path d="M871.2 153.8H899.1" stroke="#333" stroke-width="2.2"/><path d="M871.2 169.9H899.1" stroke="#333" stroke-width="2.2"/><path d="M875.2 161.9H895.0" stroke="#333" stroke-width="2.2"/><path d="M775.0 185.9H803.0" stroke="#333" stroke-width="2.2"/><path d="M823.1 185.9H851.0" stroke="#333" stroke-width="2.2"/><path d="M871.2 185.9H899.1" stroke="#333" stroke-width="2.2"/><path d="M775.0 194.0H794.9" stroke="#333" stroke-width="2.2"/><path d="M827.1 194.0H846.9" stroke="#333" stroke-width="2.2"/><path d="M879.0 194.0H899.1" stroke="#333" stroke-width="2.2"/><path d="M775.0 201.9H803.0" stroke="#333" stroke-width="2.2"/><path d="M823.1 201.9H851.0" stroke="#333" stroke-width="2.2"/><path d="M871.2 201.9H899.1" stroke="#333" stroke-width="2.2"/><path d="M775.0 210.0H794.9" stroke="#333" stroke-width="2.2"/><path d="M827.1 210.0H846.9" stroke="#333" stroke-width="2.2"/><path d="M879.0 210.0H899.1" stroke="#333" stroke-width="2.2"/><path d="M948.8 155.6Q950.5 163.5 936 164.3M940.5 159.5L935 164.3L940.5 169" fill="none" stroke="#3b82c8" stroke-width="1.9"/><path d="M962.0 152.6L967.0 158.5L972.0 152.6" fill="none" stroke="#333" stroke-width="2.9" stroke-linecap="round" stroke-linejoin="round"/><rect x="918.4" y="184.4" width="27.4" height="27.2" fill="#fafafa" stroke="#333" stroke-width="1.8"/><path d="M932.2 184.4V190M932.2 206V211.6" stroke="#333" stroke-width="1.6"/><rect x="918.4" y="189.5" width="27.4" height="16.8" fill="#fafafa" stroke="#3b82c8" stroke-width="1.8"/><path d="M922 197.9H942M925.5 194.2L921.8 197.9L925.5 201.6M938.5 194.2L942.2 197.9L938.5 201.6" fill="none" stroke="#3b82c8" stroke-width="1.8"/><path d="M962.0 196.5L967.0 203.0L972.0 196.5" fill="none" stroke="#333" stroke-width="2.9" stroke-linecap="round" stroke-linejoin="round"/><path d="M775.0 229.8H802.9" stroke="#333" stroke-width="2.2"/><path d="M791.3 238.0H802.9" stroke="#333" stroke-width="2.2"/><path d="M791.3 246.0H802.9" stroke="#333" stroke-width="2.2"/><path d="M775.0 253.8H802.9" stroke="#333" stroke-width="2.2"/><path d="M823.1 229.8H851.0" stroke="#333" stroke-width="2.2"/><path d="M839.4 238.0H851.0" stroke="#333" stroke-width="2.2"/><path d="M839.4 246.0H851.0" stroke="#333" stroke-width="2.2"/><path d="M823.1 253.8H851.0" stroke="#333" stroke-width="2.2"/><path d="M786.5 241.8H776M780 237.8L776 241.8L780 245.8" fill="none" stroke="#3b82c8" stroke-width="2"/><path d="M823.3 241.8H834M830 237.8L834 241.8L830 245.8" fill="none" stroke="#3b82c8" stroke-width="2"/><path d="M910 256L930 236M922 236H930.5V244.5" fill="none" stroke="#3b82c8" stroke-width="1.8"/><path d="M944.0 240.4L948.9 246.8L953.8 240.4" fill="none" stroke="#333" stroke-width="2.9" stroke-linecap="round" stroke-linejoin="round"/><ellipse cx="1042.9" cy="157.7" rx="9" ry="10.2" fill="none" stroke="#333" stroke-width="2.2"/><ellipse cx="1070.9" cy="184.1" rx="9" ry="10.2" fill="none" stroke="#333" stroke-width="2.2"/><path d="M1072.6 147L1042.4 194.8" stroke="#333" stroke-width="2"/><path d="M1100.1 168.9L1105.0 174.6L1110.0 168.9" fill="none" stroke="#333" stroke-width="2.9" stroke-linecap="round" stroke-linejoin="round"/><rect x="1166.2" y="141.9" width="29.5" height="25.6" fill="#fafafa" stroke="#333" stroke-width="1.8"/><path d="M1166 150.3H1196M1166 159.6H1196M1182.3 142V168M1190 142V168M1171.4 142V168" stroke="#666" stroke-width="1.4"/><rect x="1172.2" y="142.3" width="9.6" height="7.2" fill="#f2a3ab" stroke="#c8302c" stroke-width="1.6"/><rect x="1172.2" y="151" width="5.5" height="8" fill="#93bde9" stroke="#2a64b8" stroke-width="1.6"/><rect x="1172.2" y="160.4" width="13.7" height="7.2" fill="#f2a3ab" stroke="#c8302c" stroke-width="1.6"/><path d="M1453.0 152.8L1458.0 158.7L1463.0 152.8" fill="none" stroke="#333" stroke-width="2.9" stroke-linecap="round" stroke-linejoin="round"/><rect x="1166.2" y="185.4" width="29.5" height="26" fill="#fafafa" stroke="#333" stroke-width="1.8"/><path d="M1166 193.3H1196M1166 202.6H1196M1175.8 185.5V211.5M1186.2 185.5V211.5" stroke="#666" stroke-width="1.4"/><rect x="1175.8" y="192.7" width="20" height="19.1" fill="#93bde9" stroke="#2a64b8" stroke-width="1.6"/><path d="M1180 205.5L1195 195.5Q1198 194.0 1197 197.0L1183.5 209.0" fill="#fafafa" stroke="#fafafa" stroke-width="4"/><path d="M1180.5 206.0L1194.5 195.5Q1197.5 194.0 1196.5 197.3L1183.5 209.0Z" fill="#fafafa" stroke="#333" stroke-width="1.5" stroke-linejoin="round"/><path d="M1170.5 212.0Q1172 206.5 1177 205.5Q1181.5 205.0 1183.5 209.0Q1180 213.0 1170.5 212.0Z" fill="#93bde9" stroke="#2a64b8" stroke-width="1.6"/><path d="M1383.8 196.5L1388.2 202.5L1392.5 196.5" fill="none" stroke="#333" stroke-width="2.9" stroke-linecap="round" stroke-linejoin="round"/><rect x="1166.2" y="229.4" width="29.5" height="26" fill="#fafafa" stroke="#333" stroke-width="1.8"/><path d="M1166 235.1H1196M1166 249.9H1196M1171.4 229.5V255.5M1190.6 229.5V255.5" stroke="#666" stroke-width="1.4"/><rect x="1171.8" y="234.9" width="19" height="15.5" fill="#93bde9" stroke="#2a64b8" stroke-width="1.6"/><path d="M1180 249.5L1195 239.5Q1198 238.0 1197 241.0L1183.5 253.0" fill="#fafafa" stroke="#fafafa" stroke-width="4"/><path d="M1180.5 250.0L1194.5 239.5Q1197.5 238.0 1196.5 241.3L1183.5 253.0Z" fill="#fafafa" stroke="#333" stroke-width="1.5" stroke-linejoin="round"/><path d="M1170.5 256.0Q1172 250.5 1177 249.5Q1181.5 249.0 1183.5 253.0Q1180 257.0 1170.5 256.0Z" fill="#93bde9" stroke="#2a64b8" stroke-width="1.6"/><path d="M1329.8 240.5L1334.4 246.5L1339.0 240.5" fill="none" stroke="#333" stroke-width="2.9" stroke-linecap="round" stroke-linejoin="round"/><path d="M1532 142H1563.7M1532 139.2V144.9M1563.7 139.2V144.9" stroke="#3b82c8" stroke-width="1.5"/><rect x="1521.2" y="150.3" width="53.6" height="41.2" fill="#fafafa" stroke="#333" stroke-width="2"/><path d="M1521 163.7H1575M1521 178.2H1575M1535 150V192M1561 150V192" stroke="#666" stroke-width="1.8"/><rect x="1535" y="163.7" width="26" height="14.5" fill="#93bde9" stroke="#2a60b8" stroke-width="2.2"/><path d="M1591.2 168.5L1596.2 174.5L1601.2 168.5" fill="none" stroke="#333" stroke-width="2.9" stroke-linecap="round" stroke-linejoin="round"/><circle cx="1693" cy="163.6" r="20.3" fill="#fafafa" stroke="#333" stroke-width="2"/><path d="M1678.5 178.5L1656.5 200" stroke="#333" stroke-width="2"/><path d="M1729.3 168.5L1734.3 174.5L1739.3 168.5" fill="none" stroke="#333" stroke-width="2.9" stroke-linecap="round" stroke-linejoin="round"/><rect x="1801.3" y="140.2" width="61.4" height="61.4" fill="#fafafa" stroke="#333" stroke-width="2"/><rect x="1802.3" y="141.2" width="59.4" height="7.8" fill="#c8c8c8"/><path d="M1802 167.5H1862M1802 184.5H1862M1821.8 149V201M1843.3 149V201" stroke="#666" stroke-width="1.6"/><circle cx="1829.7" cy="166.4" r="19.4" fill="#fafafa" stroke="#333" stroke-width="2"/><circle cx="1829.7" cy="166.4" r="22" fill="none" stroke="#fafafa" stroke-width="2.4"/><circle cx="1829.7" cy="166.4" r="19.4" fill="none" stroke="#333" stroke-width="2"/><path d="M1844 182.5L1862.5 201" stroke="#333" stroke-width="2.6"/><rect x="1818.8" y="163" width="7.2" height="11.3" fill="#c8c8c8" stroke="#888" stroke-width="1"/><rect x="1825.6" y="153.5" width="7.9" height="20.8" fill="#fafafa" stroke="#333" stroke-width="1.5"/><rect x="1833.5" y="158" width="7.5" height="16.3" fill="#8fb8e8" stroke="#3b82c8" stroke-width="1.5"/></svg>
</body></html>
